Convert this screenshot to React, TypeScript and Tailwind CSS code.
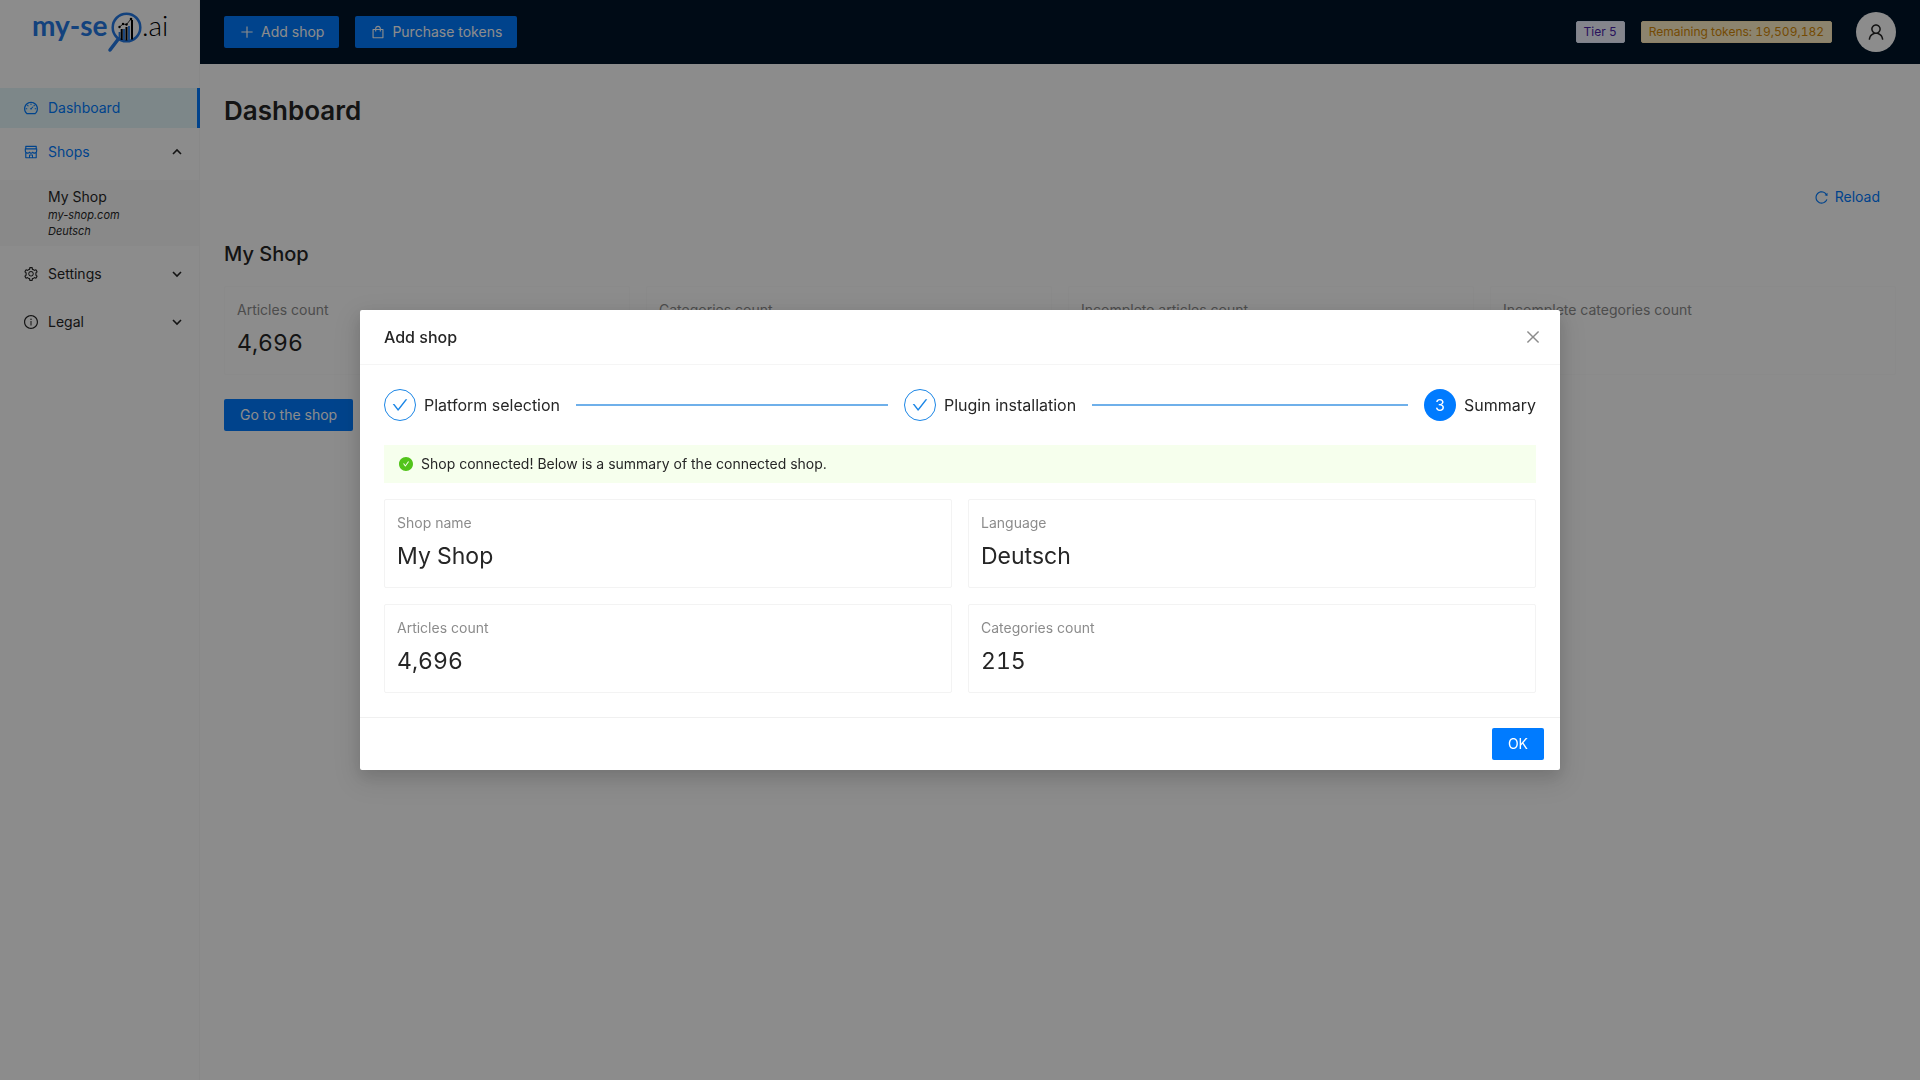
import type { ReactNode } from 'react';
import {
  AiFillCheckCircle,
  AiOutlineCheck,
  AiOutlineClose,
  AiOutlineDashboard,
  AiOutlineInfoCircle,
  AiOutlinePlus,
  AiOutlineReload,
  AiOutlineSetting,
  AiOutlineShop,
  AiOutlineShopping,
  AiOutlineUser,
} from 'react-icons/ai';

const shopStats = [
  { title: 'Articles count', value: '4,696' },
  { title: 'Categories count', value: '215' },
  { title: 'Incomplete articles count', value: '0' },
  { title: 'Incomplete categories count', value: '0' },
];

const summaryStats = [
  { title: 'Shop name', value: 'My Shop' },
  { title: 'Language', value: 'Deutsch' },
  { title: 'Articles count', value: '4,696' },
  { title: 'Categories count', value: '215' },
];

const steps = ['Platform selection', 'Plugin installation', 'Summary'];

const Logo = () => (
  <a href="#" aria-label="my-seo.ai" className="flex h-16 justify-center">
    <svg width="136" height="64" viewBox="0 0 136 64" fontFamily="Lato, sans-serif">
      <text x="0" y="36" fontSize="28" fontWeight="700" fill="#2478e4">my-se</text>
      <circle cx="94.500" cy="27.500" r="13.800" fill="none" stroke="#2478e4" strokeWidth="2.500" />
      <path d="M86 39.500 78 50" stroke="#2478e4" strokeWidth="3.500" strokeLinecap="round" />
      <path d="M87.500 32v7M92 29v11.500M97 26v14.500" stroke="#2478e4" strokeWidth="1.800" />
      <path d="M89.700 29v11M94.500 27v13.500M100 20v19.500" stroke="#000" strokeWidth="2" />
      <path d="M87.500 27 91 24 94.500 24.500 99 19" fill="none" stroke="#000" strokeWidth="0.800" />
      <circle cx="87.500" cy="27" r="1.200" />
      <circle cx="91" cy="24" r="1.200" />
      <circle cx="94.500" cy="24.500" r="1.200" />
      <circle cx="99" cy="19" r="1.300" />
      <text x="110" y="36" fontSize="28" fontWeight="300" fill="#000">.ai</text>
    </svg>
  </a>
);

const Arrow = ({ up = false }: { up?: boolean }) => (
  <svg width="10" height="10" viewBox="0 0 10 10" fill="none" stroke="#262626" strokeWidth="1.600" className="ml-auto">
    <path d={up ? 'M1 7 5 3l4 4' : 'M1 3l4 4 4-4'} />
  </svg>
);

const MenuItem = ({ icon, label, children }: { icon: ReactNode; label: string; children?: ReactNode }) => (
  <button className="flex h-10 w-full items-center gap-[9px] pr-[17px] pl-[23px]">
    {icon}
    <span>{label}</span>
    {children}
  </button>
);

const StatCard = ({ title, value, border }: { title: string; value: string; border: string }) => (
  <div className={`rounded-xs border p-3 ${border}`}>
    <div className="mb-1 leading-[22px] text-[#8c8c8c]">{title}</div>
    <div className="text-[23px] leading-[37px] tabular-nums">{value}</div>
  </div>
);

const Sidebar = () => (
  <aside className="w-[200px] shrink-0 border-r border-[#f8f8f8]">
    <Logo />
    <nav className="mt-6">
      <div className="-mr-px border-r-3 border-[#007bff] bg-[#e3f6fa] text-[#007bff]">
        <MenuItem icon={<AiOutlineDashboard size={16} />} label="Dashboard" />
      </div>
      <div className="mt-1 text-[#007bff]">
        <MenuItem icon={<AiOutlineShop size={16} />} label="Shops">
          <Arrow up />
        </MenuItem>
      </div>
      <a href="#" className="mt-2 block bg-[#fafafa] py-[7px] pl-12">
        <span className="block leading-5">My Shop</span>
        <span className="block text-[11px] leading-4 italic">my-shop.com</span>
        <span className="block text-[11px] leading-4 italic">Deutsch</span>
      </a>
      <div className="mt-2 space-y-2">
        <MenuItem icon={<AiOutlineSetting size={16} />} label="Settings">
          <Arrow />
        </MenuItem>
        <MenuItem icon={<AiOutlineInfoCircle size={16} />} label="Legal">
          <Arrow />
        </MenuItem>
      </div>
    </nav>
  </aside>
);

const Header = () => (
  <header className="flex h-16 items-center gap-4 bg-[#001529] px-6">
    <button className="flex h-8 items-center gap-1.5 rounded-xs bg-[#007bff] px-[15px] text-white">
      <AiOutlinePlus size={16} />
      Add shop
    </button>
    <button className="flex h-8 items-center gap-1.5 rounded-xs bg-[#007bff] px-[15px] text-white">
      <AiOutlineShopping size={16} />
      Purchase tokens
    </button>
    <div className="ml-auto flex items-center gap-4 text-xs leading-5 tabular-nums">
      <span className="rounded-xs border border-[#e4ecff] bg-[#f0f2ff] px-[7px] text-[#4a22a8]">Tier 5</span>
      <span className="rounded-xs border border-[#ffeab8] bg-[#fff1c8] px-[7px] text-[#d48806]">
        Remaining tokens: 19,509,182
      </span>
    </div>
    <button aria-label="Account" className="ml-2 flex size-10 items-center justify-center rounded-full bg-white">
      <AiOutlineUser size={20} />
    </button>
  </header>
);

const Dashboard = () => (
  <main className="px-6">
    <h1 className="pt-[25px] text-[26px] leading-11 font-semibold">Dashboard</h1>
    <div className="mt-12 flex justify-end">
      <button className="flex h-8 items-center gap-1.5 px-4 text-[#007bff]">
        <AiOutlineReload size={15} />
        Reload
      </button>
    </div>
    <h2 className="mt-[25px] text-xl leading-8 font-medium">My Shop</h2>
    <div className="mt-4 grid grid-cols-4 gap-4">
      {shopStats.map((stat) => (
        <StatCard key={stat.title} {...stat} border="border-[#fbfbfb]" />
      ))}
    </div>
    <button className="mt-6 h-8 rounded-xs bg-[#007bff] px-4 text-white">Go to the shop</button>
  </main>
);

const Steps = () => (
  <ol className="flex gap-4 text-base">
    {steps.map((label, index) => {
      const last = index === steps.length - 1;
      return (
        <li key={label} className={last ? 'flex items-center' : 'flex flex-1 items-center'}>
          {last ? (
            <span className="flex size-8 items-center justify-center rounded-full bg-[#007bff] text-white">{index + 1}</span>
          ) : (
            <span className="flex size-8 items-center justify-center rounded-full border border-[#1b86e6] text-[#1b86e6]">
              <AiOutlineCheck size={18} />
            </span>
          )}
          <span className="ml-2">{label}</span>
          {!last && <span className="ml-4 h-0.5 flex-1 bg-[#6fb0ea]" />}
        </li>
      );
    })}
  </ol>
);

const AddShopModal = () => (
  <div className="fixed inset-0 flex items-center justify-center bg-black/45">
    <div
      role="dialog"
      aria-label="Add shop"
      className="w-full max-w-[1200px] rounded-xs bg-white shadow-[0_6px_16px_rgba(0,0,0,0.12),0_9px_28px_8px_rgba(0,0,0,0.08)]"
    >
      <div className="flex items-center justify-between border-b border-[#f5f5f5] px-6 py-4">
        <h2 className="text-base leading-[22px] font-medium">Add shop</h2>
        <button aria-label="Close" className="-mr-1.5 text-[#8c8c8c]">
          <AiOutlineClose size={18} />
        </button>
      </div>
      <div className="p-6">
        <Steps />
        <div role="status" className="mt-6 mb-4 flex items-center gap-[7px] bg-[#f6ffed] px-3.5 py-2 leading-[22px]">
          <AiFillCheckCircle size={16} className="text-[#52c41a]" />
          Shop connected! Below is a summary of the connected shop.
        </div>
        <div className="grid grid-cols-2 gap-4">
          {summaryStats.map((stat) => (
            <StatCard key={stat.title} {...stat} border="border-[#f3f3f3]" />
          ))}
        </div>
      </div>
      <div className="flex justify-end border-t border-[#f0f0f0] px-4 py-2.5">
        <button className="h-8 rounded-xs bg-[#007bff] px-4 text-white">OK</button>
      </div>
    </div>
  </div>
);

export default function App() {
  return (
    <div className="flex min-h-screen bg-white font-[Inter,sans-serif] text-sm text-[#262626]">
      <Sidebar />
      <div className="min-w-0 flex-1">
        <Header />
        <Dashboard />
      </div>
      <AddShopModal />
    </div>
  );
}
